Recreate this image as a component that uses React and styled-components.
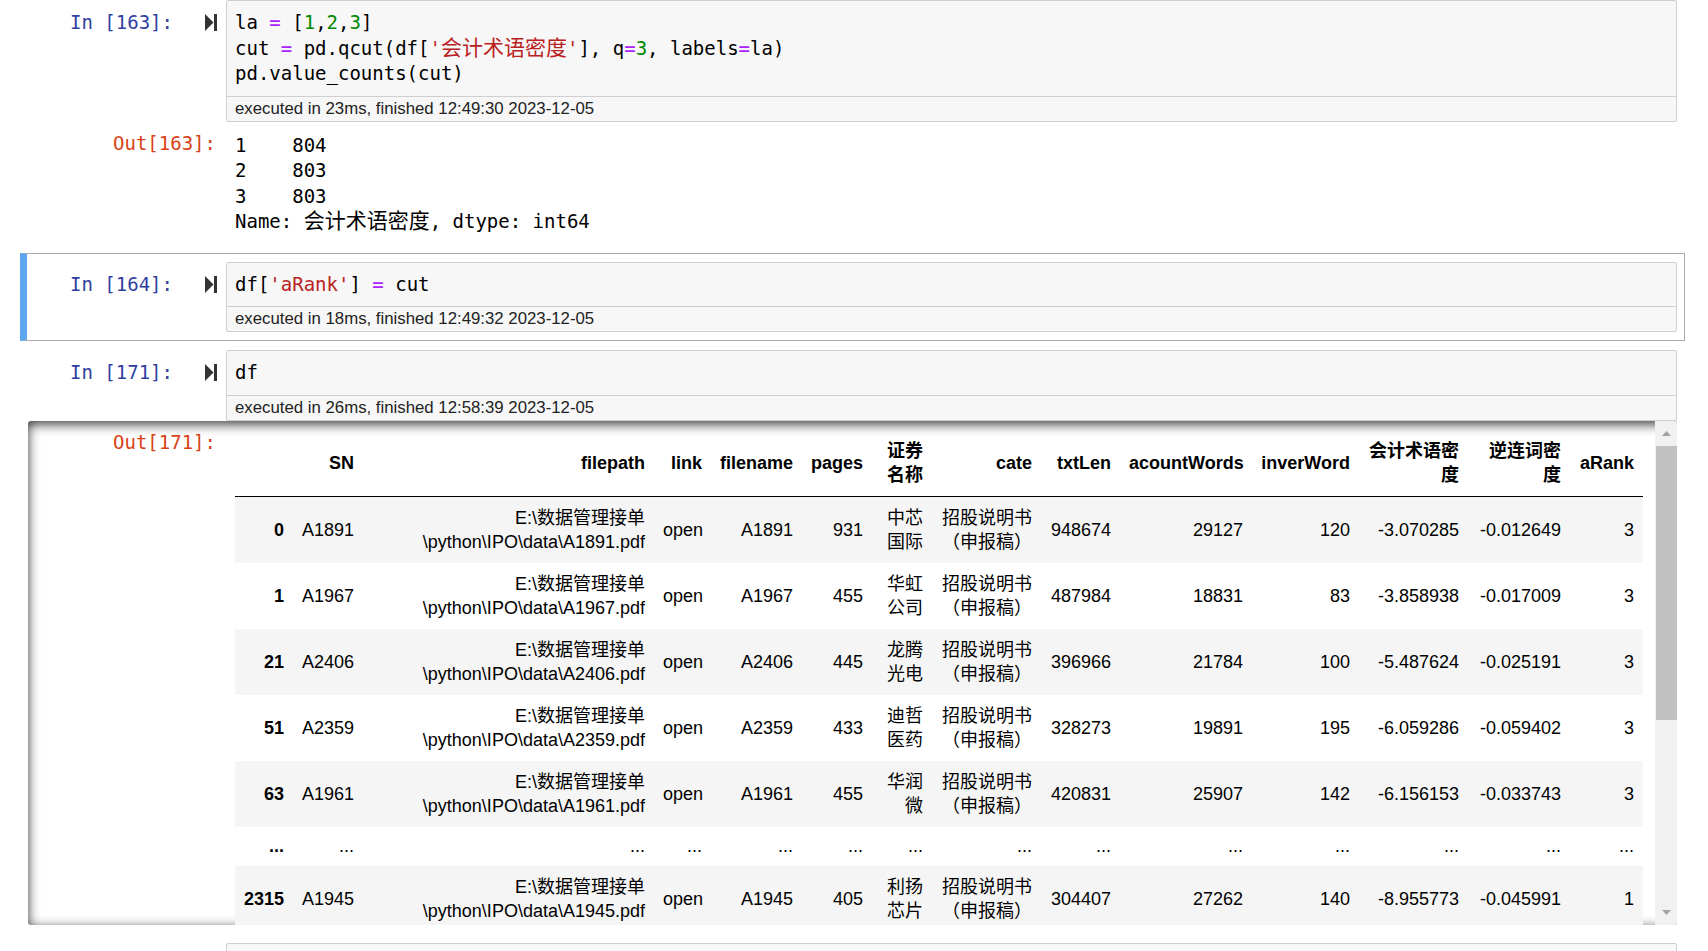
import React from 'react';
import styled, { createGlobalStyle } from 'styled-components';

const MONO = `"DejaVu Sans Mono", "Noto Sans CJK SC", monospace`;
const SANS = `"Liberation Sans", "Noto Sans CJK SC", sans-serif`;

const GlobalStyle = createGlobalStyle`
  html, body {
    margin: 0;
    padding: 0;
    background: #fff;
    overflow: hidden;
  }
  body {
    font-family: ${SANS};
  }
`;

const Notebook = styled.div`
  margin-top: -9px;
  padding: 0 23px 0 20px;
`;

const Cell = styled.div`
  display: flex;
  flex-direction: column;
  border: 1px solid ${p => (p.$selected ? '#ababab' : 'transparent')};
  border-left: ${p => (p.$selected ? '7px solid #5ea6ef' : '1px solid transparent')};
  padding: 8px 7px 8px ${p => (p.$selected ? '1px' : '7px')};
`;

const Row = styled.div`
  display: flex;
  align-items: flex-start;
`;

const Prompt = styled.div`
  width: 198px;
  flex-shrink: 0;
  display: flex;
  justify-content: flex-end;
  padding-top: 10px;
  font-family: ${MONO};
  font-size: 19px;
  line-height: 25.5px;
  color: #303f9f;
  white-space: pre;
`;

const RunIcon = styled.svg`
  margin: 4px 9px 0 32px;
  flex-shrink: 0;
`;

const CodeBox = styled.div`
  flex: 1;
  min-width: 0;
  border: 1px solid #cfcfcf;
  border-radius: 2px;
  background: #f7f7f7;
`;

const CodeArea = styled.div`
  padding: 9px 8px;
  font-family: ${MONO};
  font-size: 19px;
  line-height: 25.5px;
  color: #000;
`;

const Line = styled.div`
  height: 25.5px;
  white-space: pre;
`;

/* CJK glyphs in the notebook's monospace font are a bit wider than our fallback */
const Wide = styled.span`
  font-size: 21px;
  line-height: 25.5px;
`;

const Op = styled.span`
  color: #aa22ff;
`;
const Num = styled.span`
  color: #008800;
`;
const Str = styled.span`
  color: #ba2121;
`;

const Timing = styled.div`
  border-top: 1px solid #cfcfcf;
  height: 24px;
  line-height: 24px;
  padding: 0 8px;
  font-family: ${SANS};
  font-size: 16.8px;
  color: #222;
`;

const OutPrompt = styled.div`
  width: 198px;
  flex-shrink: 0;
  box-sizing: border-box;
  padding: 9px 10px 0 0;
  text-align: right;
  font-family: ${MONO};
  font-size: 19px;
  line-height: 25.5px;
  color: #d84315;
`;

const OutText = styled.div`
  padding: 11px 0 9px 9px;
  font-family: ${MONO};
  font-size: 19px;
  line-height: 25.5px;
  color: #000;
`;

const ScrollOutput = styled.div`
  display: flex;
  height: 504px;
  border-radius: 3px;
  box-shadow: inset 0 3px 12px rgba(0, 0, 0, 0.8);
  overflow: hidden;
`;

const TableWrap = styled.div`
  flex: 1;
  min-width: 0;
  overflow: hidden;
  padding: 9px 11px 0 9px;
`;

const Scrollbar = styled.div`
  width: 22px;
  flex-shrink: 0;
  display: flex;
  flex-direction: column;
  background: #f1f1f1;
`;

const ScrollButton = styled.div`
  height: 25px;
  display: flex;
  align-items: center;
  justify-content: center;
`;

const Thumb = styled.div`
  height: 274px;
  margin-left: 1px;
  background: #c1c1c1;
`;

const Spacer = styled.div`
  flex: 1;
`;

const DataTable = styled.table`
  border-collapse: collapse;
  border-spacing: 0;
  table-layout: fixed;
  width: 1408px;
  font-family: ${SANS};
  font-size: 18px;
  color: #000;
`;

const Col = styled.col`
  width: ${p => p.$w}px;
`;

const Head = styled.thead`
  border-bottom: 1px solid #000;
`;

const TRow = styled.tr`
  background: ${p => (p.$shaded ? '#f5f5f5' : 'transparent')};
  line-height: ${p => (p.$compact ? '21px' : '24px')};
`;

const Th = styled.th`
  padding: 9px;
  text-align: right;
  vertical-align: middle;
  font-weight: bold;
`;

const Td = styled.td`
  padding: 9px;
  text-align: right;
  vertical-align: middle;
`;

const widths = [58, 70, 291, 57, 91, 70, 60, 109, 79, 132, 107, 109, 102, 73];
const headers = ['', 'SN', 'filepath', 'link', 'filename', 'pages', '证券名称', 'cate', 'txtLen', 'acountWords', 'inverWord', '会计术语密度', '逆连词密度', 'aRank'];

const mk = (idx, sn, pages, name, len, acc, inv, d1, d2, rank) => [
  idx, sn, `E:\\数据管理接单\\python\\IPO\\data\\${sn}.pdf`, 'open', sn, pages, name,
  '招股说明书（申报稿）', len, acc, inv, d1, d2, rank,
];

const rows = [
  mk('0', 'A1891', '931', '中芯国际', '948674', '29127', '120', '-3.070285', '-0.012649', '3'),
  mk('1', 'A1967', '455', '华虹公司', '487984', '18831', '83', '-3.858938', '-0.017009', '3'),
  mk('21', 'A2406', '445', '龙腾光电', '396966', '21784', '100', '-5.487624', '-0.025191', '3'),
  mk('51', 'A2359', '433', '迪哲医药', '328273', '19891', '195', '-6.059286', '-0.059402', '3'),
  mk('63', 'A1961', '455', '华润微', '420831', '25907', '142', '-6.156153', '-0.033743', '3'),
  Array(14).fill('...'),
  mk('2315', 'A1945', '405', '利扬芯片', '304407', '27262', '140', '-8.955773', '-0.045991', '1'),
];

const Run = () => (
  <RunIcon width="12" height="17" viewBox="0 0 12 17">
    <polygon points="0,0 8.5,8.5 0,17" fill="#333" />
    <rect x="9" y="0" width="3" height="17" fill="#333" />
  </RunIcon>
);

const Input = ({ n, children, time }) => (
  <Row>
    <Prompt>
      {n && <span>{`In [${n}]:`}</span>}
      <Run />
    </Prompt>
    <CodeBox>
      <CodeArea>{children}</CodeArea>
      {time && <Timing>{time}</Timing>}
    </CodeBox>
  </Row>
);

const Frame = () => (
  <DataTable>
    <colgroup>
      {widths.map((w, i) => <Col key={i} $w={w} />)}
    </colgroup>
    <Head>
      <TRow>
        {headers.map((h, i) => <Th key={i}>{h}</Th>)}
      </TRow>
    </Head>
    <tbody>
      {rows.map((r, ri) => (
        <TRow key={ri} $shaded={ri % 2 === 0} $compact={r[0] === '...'}>
          <Th>{r[0]}</Th>
          {r.slice(1).map((v, ci) => <Td key={ci}>{v}</Td>)}
        </TRow>
      ))}
    </tbody>
  </DataTable>
);

const Arrow = ({ up }) => (
  <svg width="9" height="5" viewBox="0 0 9 5">
    <polygon points={up ? '0,5 4.5,0 9,5' : '0,0 4.5,5 9,0'} fill="#a3a3a3" />
  </svg>
);

export default function App() {
  return (
    <Notebook>
      <GlobalStyle />
      <Cell>
        <Input n="163" time="executed in 23ms, finished 12:49:30 2023-12-05">
          <Line>la <Op>=</Op> [<Num>1</Num>,<Num>2</Num>,<Num>3</Num>]</Line>
          <Line>
            cut <Op>=</Op> pd.qcut(df[<Str>'<Wide>会计术语密度</Wide>'</Str>], q<Op>=</Op><Num>3</Num>, labels<Op>=</Op>la)
          </Line>
          <Line>pd.value_counts(cut)</Line>
        </Input>
        <Row>
          <OutPrompt>Out[163]:</OutPrompt>
          <OutText>
            <Line>{'1    804'}</Line>
            <Line>{'2    803'}</Line>
            <Line>{'3    803'}</Line>
            <Line>Name: <Wide>会计术语密度</Wide>, dtype: int64</Line>
          </OutText>
        </Row>
      </Cell>

      <Cell $selected>
        <Input n="164" time="executed in 18ms, finished 12:49:32 2023-12-05">
          <Line>df[<Str>'aRank'</Str>] <Op>=</Op> cut</Line>
        </Input>
      </Cell>

      <Cell>
        <Input n="171" time="executed in 26ms, finished 12:58:39 2023-12-05">
          <Line>df</Line>
        </Input>
        <ScrollOutput>
          <OutPrompt>Out[171]:</OutPrompt>
          <TableWrap>
            <Frame />
          </TableWrap>
          <Scrollbar>
            <ScrollButton><Arrow up /></ScrollButton>
            <Thumb />
            <Spacer />
            <ScrollButton><Arrow /></ScrollButton>
          </Scrollbar>
        </ScrollOutput>
      </Cell>

      <Cell>
        <Input>
          <Line />
        </Input>
      </Cell>
    </Notebook>
  );
}
